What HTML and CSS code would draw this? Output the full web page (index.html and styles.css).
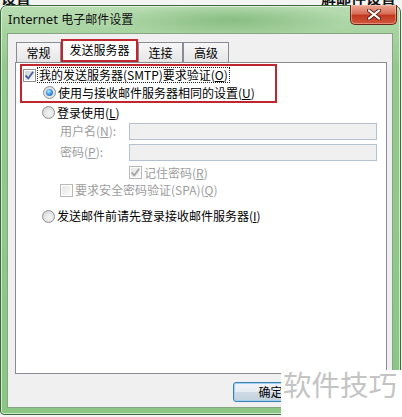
FILE: index.html
```html
<!DOCTYPE html>
<html>
  <head>
    <title>Internet 电子邮件设置</title>
    <link rel="stylesheet" href="styles.css">
  </head>
  <body>
    <div class="bg-strip">
      <span>台设置</span>
      <span>解邮件设置</span>
    </div>

    <div class="window">
      <div class="titlebar">
        <span class="title">Internet <span class="title-cjk">电子邮件设置</span></span>
        <button class="close-button">
          <svg width="14" height="11" viewBox="0 0 14 11">
            <path d="M2 1.5 L12 9.5 M12 1.5 L2 9.5" stroke="#5a2418" stroke-width="4" stroke-linecap="round"/>
            <path d="M2 1.5 L12 9.5 M12 1.5 L2 9.5" stroke="#ffffff" stroke-width="2.2" stroke-linecap="round"/>
          </svg>
        </button>
      </div>

      <div class="client">
        <div class="tabs">
          <div class="tab tab-first">常规</div>
          <div class="tab tab-selected">发送服务器</div>
          <div class="tab tab-third">连接</div>
          <div class="tab tab-last">高级</div>
        </div>

        <div class="panel">
          <div class="red-box">
            <div class="row row-auth">
              <span class="checkbox">
                <svg class="tick" width="9" height="9" viewBox="0 0 9 9">
                  <path d="M0.5 4.5 L3.3 7.3 L8.2 0.8" fill="none" stroke="#4a5f97" stroke-width="1.8"/>
                </svg>
              </span>
              <span class="focus-text">我的发送服务器(SMTP)要求验证(<u>O</u>)</span>
            </div>
            <div class="row row-same">
              <span class="radio radio-on"></span>
              <span>使用与接收邮件服务器相同的设置(<u>U</u>)</span>
            </div>
          </div>

          <div class="row row-login">
            <span class="radio"></span>
            <span>登录使用(<u>L</u>)</span>
          </div>

          <div class="row field">
            <span class="field-label disabled">用户名(<u>N</u>):</span>
            <span class="input-box"></span>
          </div>
          <div class="row field field-second">
            <span class="field-label disabled">密码(<u>P</u>):</span>
            <span class="input-box"></span>
          </div>

          <div class="row row-remember">
            <span class="checkbox checkbox-disabled">
              <svg class="tick" width="9" height="9" viewBox="0 0 9 9">
                <path d="M0.5 4.5 L3.3 7.3 L8.2 0.8" fill="none" stroke="#a4a4a4" stroke-width="1.8"/>
              </svg>
            </span>
            <span class="disabled">记住密码(<u>R</u>)</span>
          </div>

          <div class="row row-spa">
            <span class="checkbox checkbox-disabled"></span>
            <span class="disabled">要求安全密码验证(SPA)(<u>Q</u>)</span>
          </div>

          <div class="row row-before">
            <span class="radio"></span>
            <span>发送邮件前请先登录接收邮件服务器(<u>I</u>)</span>
          </div>
        </div>

        <div class="buttons">
          <button class="dialog-button default-button">确定</button>
        </div>
      </div>
    </div>

    <div class="watermark">软件技巧</div>
  </body>
</html>
```

FILE: styles.css
```css
body {
  margin: 0;
  width: 402px;
  height: 417px;
  overflow: hidden;
  position: relative;
  background-color: #f3f5f3;
  font-family: "Noto Sans CJK SC", sans-serif;
  font-size: 12px;
  color: #000;
}
.bg-strip {
  height: 5px;
  overflow: hidden;
  display: flex;
  justify-content: space-between;
  align-items: flex-end;
  padding: 0 6px 0 0;
  margin-left: -14px;
  font-size: 15px;
  font-weight: bold;
  line-height: 14px;
  color: #111;
}
.window {
  width: 401px;
  height: 410px;
  box-sizing: border-box;
  border: 1px solid #3e6a3b;
  border-radius: 7px 7px 4px 4px;
  padding: 0 7px 6px 6px;
  display: flex;
  flex-direction: column;
  background:
    radial-gradient(ellipse 120px 16px at 230px 14px, rgba(110, 172, 104, 0.6), transparent),
    linear-gradient(to bottom, #b9dcb3 0, #a7d3a0 27px, #93ca8c 60px, #8bc685 100%);
  box-shadow: inset 0 0 0 1px rgba(235, 250, 232, 0.7);
}
.titlebar {
  height: 27px;
  display: flex;
  align-items: flex-start;
}
.title {
  margin: 5px 0 0 1px;
  font-family: "Noto Sans", "Noto Sans CJK SC", sans-serif;
  font-size: 13px;
  line-height: 16px;
  color: #111;
}
.title-cjk {
  font-family: "Noto Sans CJK SC", sans-serif;
  font-size: 12px;
}
.close-button {
  margin: -1px -4px 0 auto;
  width: 47px;
  height: 20px;
  padding: 0;
  border: 1px solid #6b2418;
  border-top: none;
  border-radius: 0 0 5px 5px;
  display: flex;
  justify-content: center;
  align-items: center;
  background: linear-gradient(to bottom, #eba995 0, #d9705a 45%, #c2391f 55%, #d1573c 100%);
  box-shadow: inset 0 0 0 1px rgba(255, 210, 200, 0.45);
}
.client {
  flex: 1;
  border: 1px solid #86a584;
  background-color: #f0f0f0;
  padding: 5px 5px 0 7px;
  display: flex;
  flex-direction: column;
}
.tabs {
  height: 23px;
  display: flex;
  align-items: flex-end;
  padding-left: 1px;
}
.tab {
  height: 20px;
  box-sizing: border-box;
  border: 1px solid #898c95;
  border-bottom: none;
  background: linear-gradient(to bottom, #f6f6f6, #e6e6e6);
  display: flex;
  justify-content: center;
  align-items: center;
  line-height: 14px;
}
.tab-first {
  width: 45px;
}
.tab-selected {
  width: 77px;
  height: 23px;
  border: 2px solid #c0262d;
  background: #fff;
  padding-bottom: 1px;
}
.tab-third {
  width: 45px;
}
.tab-last {
  width: 46px;
}
.panel {
  height: 312px;
  box-sizing: border-box;
  border: 1px solid #898c95;
  background-color: #fff;
  padding-top: 1px;
}
.red-box {
  margin-left: 4px;
  width: 257px;
  box-sizing: border-box;
  border: 2px solid #c0262d;
}
.row {
  display: flex;
  align-items: center;
  gap: 2px;
  line-height: 14px;
}
.row-auth {
  height: 18px;
  padding-left: 1px;
}
.focus-text {
  outline: 1px dotted #222;
  padding: 0 1px;
}
.row-same {
  height: 17px;
  padding-left: 21px;
}
.row-login {
  height: 19px;
  padding-left: 26px;
}
.field {
  height: 18px;
  padding-left: 44px;
  gap: 0;
}
.field-second {
  margin-top: 3px;
}
.field-label {
  width: 69px;
}
.input-box {
  width: 248px;
  height: 17px;
  box-sizing: border-box;
  border: 1px solid #b5c0d0;
  background-color: #f0f0f0;
}
.row-remember {
  height: 19px;
  margin-top: 2px;
  padding-left: 113px;
}
.row-spa {
  height: 16px;
  padding-left: 44px;
}
.row-before {
  height: 18px;
  margin-top: 9px;
  padding-left: 26px;
}
.disabled {
  color: #9d9d9d;
}
u {
  text-underline-offset: 1px;
}
.checkbox {
  width: 13px;
  height: 13px;
  box-sizing: border-box;
  flex-shrink: 0;
  border: 1px solid #8e8f8f;
  padding: 1px;
  background: linear-gradient(135deg, #cdd2d8, #f8f8f8) content-box, #fff;
  display: flex;
  justify-content: center;
  align-items: center;
}
.checkbox-disabled {
  border-color: #b8b8b8;
  background: linear-gradient(135deg, #e6e6e6, #fafafa) content-box, #fff;
}
.tick {
  overflow: visible;
}
.radio {
  width: 13px;
  height: 13px;
  box-sizing: border-box;
  flex-shrink: 0;
  border: 1px solid #8c8e90;
  border-radius: 50%;
  background: radial-gradient(circle at 60% 60%, #f7f7f7 0, #dcdcdc 70%, #cfcfcf 100%);
  display: flex;
  justify-content: center;
  align-items: center;
}
.radio-on::after {
  content: "";
  width: 7px;
  height: 7px;
  border-radius: 50%;
  background: radial-gradient(circle at 40% 35%, #b6ecff 0, #4aa3e8 40%, #1c5aa8 100%);
}
.buttons {
  flex: 1;
  display: flex;
  align-items: flex-start;
  padding: 8px 0 0 218px;
}
.dialog-button {
  width: 75px;
  height: 20px;
  padding: 0;
  border: 1px solid #707070;
  border-radius: 3px;
  font-family: "Noto Sans CJK SC", sans-serif;
  font-size: 12px;
  line-height: 14px;
  color: #000;
  background: linear-gradient(to bottom, #f2f2f2 0, #ebebeb 50%, #dddddd 50%, #cfcfcf 100%);
}
.default-button {
  border-color: #3c7fb1;
  background: linear-gradient(to bottom, #f0f4f8 0, #e4ebf2 50%, #cfdbe6 50%, #c3d1de 100%);
  box-shadow: inset 0 0 0 1px #9fd3f3;
}
.watermark {
  position: absolute;
  left: 281px;
  top: 370px;
  width: 121px;
  height: 47px;
  box-sizing: border-box;
  padding-left: 2px;
  background-color: #fff;
  font-size: 28.5px;
  line-height: 28px;
  color: #c4c4c4;
}
```
